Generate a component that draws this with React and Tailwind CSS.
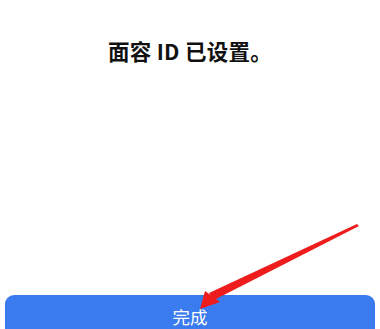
export default function App() {
  return (
    <div className="relative w-[380px] h-[329px] overflow-hidden bg-white" style={{ fontFamily: '"Noto Sans CJK SC", "Noto Sans", sans-serif' }}>
      <div className="flex flex-col h-full">
        <h1 className="pt-[34px] text-center text-[21.5px] leading-[34px] font-bold text-[#111] tracking-[0.3px]">
          面容 ID 已设置。
        </h1>
        <div className="flex-1" />
        <div className="px-[5px] -mb-[20px]">
          <button className="w-full h-[54px] rounded-[9px] bg-[#3a7bf0] text-white text-[17.5px] pt-[9px] flex justify-center items-start">
            完成
          </button>
        </div>
      </div>
      {/* red annotation arrow */}
      <svg className="absolute inset-0 pointer-events-none" width="380" height="329" viewBox="0 0 380 329">
        <polygon points="357,224 359,226 214,300 209,293" fill="#ee1c1c" />
        <polygon points="200,309 205,291 220,302" fill="#ee1c1c" />
      </svg>
    </div>
  );
}
